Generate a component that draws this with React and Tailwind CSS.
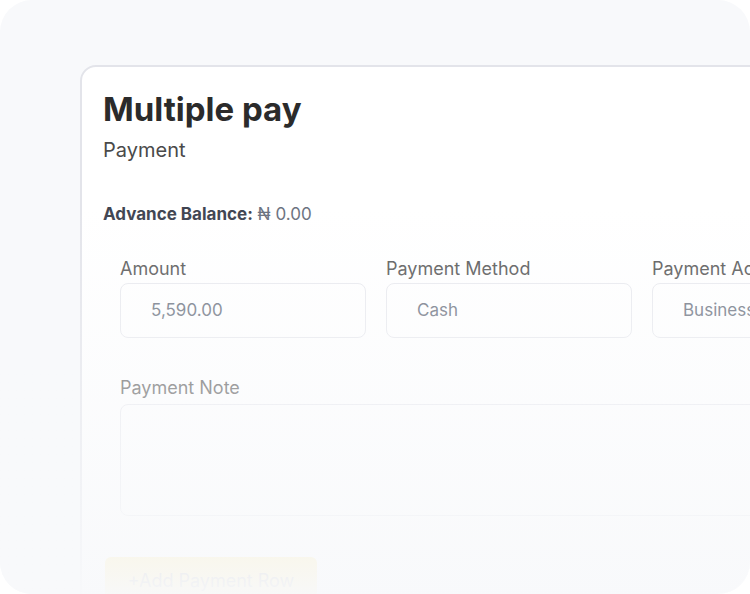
export default function App() {
  const fields = [
    { label: 'Amount', value: '5,590.00' },
    { label: 'Payment Method', value: 'Cash' },
    { label: 'Payment Account', value: 'Business Account' },
  ];

  return (
    <div className="w-[750px] h-[594px] bg-white font-['Inter',sans-serif]">
      <div className="relative w-full h-full rounded-[32px] bg-[#f8f9fb] overflow-hidden pl-[80px] pt-[65px]">
        {/* Card */}
        <div className="w-[760px] h-[600px] bg-white border-2 border-[#e3e4ea] rounded-2xl pl-[21px] pt-[20px]">
          <h1 className="text-[33px] leading-[44px] font-bold text-[#2b2b2b]">Multiple pay</h1>
          <p className="text-[20px] leading-[28px] text-[#4a4a4a] mt-[5px]">Payment</p>

          <p className="mt-[38px] text-[17px] leading-6 text-[#6b7280]">
            <span className="font-bold text-[#3f4451]">Advance Balance:</span> ₦ 0.00
          </p>

          <div className="pl-[17px] pt-[30px]">
            <div className="flex gap-[20px]">
              {fields.map((f) => (
                <div key={f.label} className="w-[246px] shrink-0">
                  <div className="text-[18px] leading-[26px] text-[#555] whitespace-nowrap">{f.label}</div>
                  <div className="mt-[1px] h-[55px] border border-[#e8e9ee] rounded-lg flex items-center pl-[30px] text-[17px] text-[#6b7280] whitespace-nowrap overflow-hidden">
                    {f.value}
                  </div>
                </div>
              ))}
            </div>

            <div className="mt-[37px] text-[18px] leading-[26px] text-[#555]">Payment Note</div>
            <div className="mt-[3px] h-[112px] w-[700px] border border-[#e8e9ee] rounded-lg" />
          </div>

          <button className="mt-[41px] ml-[2px] w-[212px] h-[46px] rounded-md bg-[#fde68a] text-[#8a8a8a] text-[18px]">
            +Add Payment Row
          </button>
        </div>

        {/* fade */}
        <div className="absolute inset-0 pointer-events-none bg-gradient-to-b from-[#f8f9fb]/0 from-[35%] to-[#f8f9fb]/[0.97]" />
      </div>
    </div>
  );
}
